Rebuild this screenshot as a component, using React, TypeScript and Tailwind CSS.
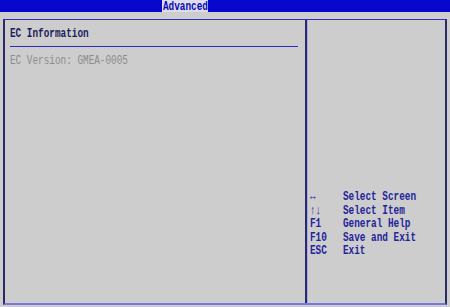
import React from 'react';

const HELP = [
  { key: '↔', label: 'Select Screen' },
  { key: '↑↓', label: 'Select Item' },
  { key: 'F1', label: 'General Help' },
  { key: 'F10', label: 'Save and Exit' },
  { key: 'ESC', label: 'Exit' },
];

// BIOS font is tall and narrow: squeeze a mono face horizontally
function Bios({ children, className = '' }: { children: React.ReactNode; className?: string }) {
  return (
    <span className={`inline-block origin-left scale-x-[0.72] whitespace-pre ${className}`}>{children}</span>
  );
}

export default function App() {
  return (
    <div
      className="w-[450px] h-[307px] bg-[#cdcdcd] flex flex-col overflow-hidden text-[13px]"
      style={{ fontFamily: '"Liberation Mono", "DejaVu Sans Mono", monospace' }}
    >
      {/* Top menu bar */}
      <div className="h-[12px] bg-[#0808cc] flex">
        <div className="ml-[162px] w-[46px] h-[12px] bg-[#dcdcec] text-[#0a0ab4] font-bold leading-[13px] pl-px">
          <Bios>Advanced</Bios>
        </div>
      </div>

      {/* Main frame */}
      <div className="mt-[7px] mx-[3px] h-[286px] flex border-t border-t-[#3030b8] border-l-2 border-l-[#2a2a64] border-r-2 border-r-[#2a2a64] border-b-2 border-b-[#7878e4]">
        {/* Left panel */}
        <div className="w-[300px] flex flex-col pl-[5px] pr-[7px] pt-[7px] leading-[14px]">
          <div className="text-[#1c1c5c] font-bold">
            <Bios>EC Information</Bios>
          </div>
          <div className="mt-[5px] h-px bg-[#2a2ac0]" />
          <div className="mt-[7px] text-[#8c8c8c]">
            <Bios>EC Version: GMEA-0005</Bios>
          </div>
        </div>

        {/* Divider */}
        <div className="w-[2px] bg-[#2a2a64] shadow-[1px_0_0_#a8a8ec]" />

        {/* Right help panel */}
        <div className="flex-1 flex flex-col pl-[3px] pt-[170px] leading-[13.5px] text-[#24249a] font-bold">
          {HELP.map((h) => (
            <div key={h.key} className="flex">
              <div className="w-[33px]">
                <Bios>{h.key}</Bios>
              </div>
              <Bios>{h.label}</Bios>
            </div>
          ))}
        </div>
      </div>
    </div>
  );
}
